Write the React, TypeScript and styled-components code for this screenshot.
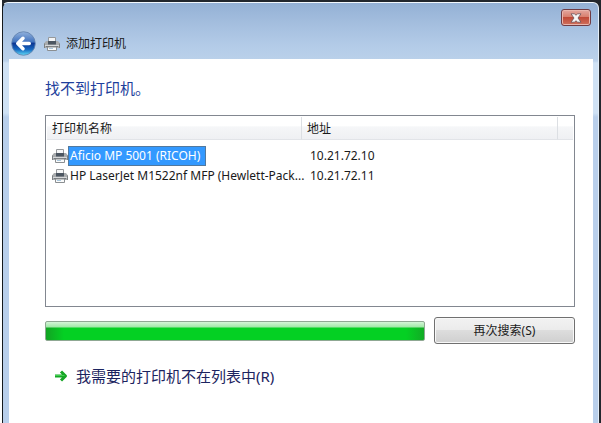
import React, { useState } from "react";
import styled, { createGlobalStyle } from "styled-components";

const GlobalStyle = createGlobalStyle`
  *, *::before, *::after { box-sizing: border-box; }
  html, body, #root { height: 100%; }
  body {
    margin: 0;
    overflow: hidden;
    background: #0b1d2e;
    font: 12px/20px "Noto Sans", "Noto Sans CJK SC", sans-serif;
    color: #1a1a1a;
  }
  button { font: inherit; color: inherit; }
  svg { flex-shrink: 0; }
`;

const Desktop = styled.div`
  min-height: 100%;
  display: flex;
  padding: 2px 2px 0;
  background: linear-gradient(90deg, #fff 0 2px, #22272d 2px);
`;

const WindowFrame = styled.main`
  flex: 1;
  min-width: 0;
  display: flex;
  flex-direction: column;
  padding: 0 5px 0 6px;
  border: 1px solid #e4eef8;
  border-top-color: #f2f8fd;
  border-bottom: 0;
  border-left-color: #14181c;
  border-radius: 6px 6px 0 0;
  background: linear-gradient(
    180deg,
    #94b1d5 0,
    #a5bfdf 22px,
    #b4cce8 44px,
    #bbd1ea 58px,
    #cfe1f4 60px,
    #cfe1f4 110px,
    #b9cfeb 114px
  );
`;

const TitleBar = styled.header`
  display: flex;
  height: 56px;
  align-items: flex-start;
  justify-content: space-between;
  padding: 6px 2px 0;
`;

const TitleGroup = styled.div`
  display: flex;
  align-items: center;
  padding-top: 22px;
`;

const Title = styled.h1`
  margin: 0 0 0 6px;
  font-size: 12px;
  font-weight: 400;
  line-height: 24px;
`;

const BackButton = styled.button`
  display: flex;
  width: 25px;
  height: 25px;
  padding: 0;
  margin-right: 8px;
  border: 0;
  background: none;
`;

const CloseButton = styled.button`
  display: flex;
  width: 30px;
  height: 17px;
  align-items: center;
  justify-content: center;
  padding: 0;
  border: 1px solid #703c44;
  border-radius: 3px;
  background: linear-gradient(180deg, #e4a79f 0, #d8806f 45%, #c04a38 50%, #d0705c 100%);
  box-shadow: inset 0 0 0 1px #e9b5ac;
`;

const Content = styled.section`
  flex: 1;
  display: flex;
  flex-direction: column;
  padding: 17px 18px 0 36px;
  background: #fff;
`;

const Heading = styled.h2`
  margin: 0 0 15px;
  font-size: 15px;
  font-weight: 400;
  line-height: 24px;
  color: #1e3f9c;
`;

const ListBox = styled.div`
  height: 192px;
  padding: 1px;
  border: 1px solid #828790;
  background: #fff;
`;

const PrinterTable = styled.table`
  width: 100%;
  border-collapse: separate;
  border-spacing: 0;
  table-layout: fixed;
  white-space: nowrap;
`;

const HeaderCell = styled.th<{ $width?: string }>`
  width: ${(p) => p.$width ?? "auto"};
  height: 23px;
  padding: 2px 6px 0 5px;
  border-right: ${(p) => (p.$width ? "1px solid #dcdfe3" : "0")};
  border-bottom: 1px solid #e2e4e8;
  background: linear-gradient(180deg, #fff 0 40%, #f5f6f8 45%, #eff0f3);
  font-weight: 400;
  line-height: 18px;
  text-align: left;
`;

const SpacerRow = styled.tr`
  height: 6px;
`;

const NameCell = styled.td`
  height: 20px;
  padding: 0 0 0 5px;
`;

const AddressCell = styled.td`
  height: 20px;
  padding: 0 0 0 8px;
`;

const PrinterName = styled.div`
  display: flex;
  align-items: center;
`;

const NameLabel = styled.span<{ $selected: boolean }>`
  height: 20px;
  padding: 0 5px 0 1px;
  border: 1px solid ${(p) => (p.$selected ? "#52799e" : "transparent")};
  background: ${(p) => (p.$selected ? "#3399ff" : "transparent")};
  color: ${(p) => (p.$selected ? "#fff" : "inherit")};
  line-height: 18px;
`;

const ActionRow = styled.div`
  display: flex;
  align-items: center;
  gap: 9px;
  margin-top: 10px;
`;

const ProgressTrack = styled.div`
  flex: 1;
  height: 20px;
  border: 1px solid #8fa893;
  border-radius: 2px;
  background:
    linear-gradient(180deg, #d4f5d7 0, #a0e8a7 5px, transparent 6px),
    linear-gradient(90deg, #12a323, #04d023 18px, #04d023 calc(100% - 18px), #12ab25);
`;

const SearchButton = styled.button`
  width: 141px;
  height: 27px;
  padding: 0;
  border: 1px solid #707070;
  border-radius: 3px;
  background: linear-gradient(180deg, #f2f2f2 0, #ebebeb 49%, #dddddd 50%, #cfcfcf 100%);
  box-shadow: inset 0 0 0 1px #f8f8f8;
`;

const MissingLink = styled.a`
  display: flex;
  align-items: center;
  align-self: flex-start;
  gap: 8px;
  margin: 20px 0 0 9px;
  color: #1c2460;
  font-size: 15px;
  line-height: 24px;
  text-decoration: none;
`;

function PrinterIcon() {
  return (
    <svg width="16" height="16" viewBox="0 0 16 16" aria-hidden="true">
      <path d="M4.500 6V1.500h7V6" fill="#f4f5f6" stroke="#96999c" />
      <path d="M2 5h2v3h8V5h2l2 2.500V12H0V7.500z" fill="#a9acae" />
      <path d="M4 5h8v3.500H4z" fill="#4c5661" />
      <path d="M.5 7.500V12M15.500 7.500V12" stroke="#7c8083" />
      <path d="M1 9.500h14" stroke="#d6d8da" />
      <path d="M2 10.500h12" stroke="#74787b" />
      <path d="M3.500 11h9v3.500h-9z" fill="#fafbfb" stroke="#8b8f92" />
      <path d="M5 12.500h4" stroke="#a9c7dd" />
    </svg>
  );
}

function BackIcon() {
  return (
    <svg width="25" height="25" viewBox="0 0 24 24" aria-hidden="true">
      <defs>
        <linearGradient id="orb" x1="0" y1="0" x2="0" y2="1">
          <stop offset="0" stopColor="#91b1dc" />
          <stop offset="0.42" stopColor="#4475c0" />
          <stop offset="0.5" stopColor="#0c3794" />
          <stop offset="0.75" stopColor="#1567c0" />
          <stop offset="1" stopColor="#62dcf8" />
        </linearGradient>
      </defs>
      <circle cx="12" cy="12" r="11.300" fill="url(#orb)" stroke="#6282ad" strokeWidth="0.8" />
      <path
        d="M11.500 7L6.500 12l5 5M7 12h10.500"
        fill="none"
        stroke="#fff"
        strokeWidth="3.400"
        strokeLinecap="round"
        strokeLinejoin="round"
      />
    </svg>
  );
}

function CloseIcon() {
  return (
    <svg width="12" height="10" viewBox="0 0 12 10" aria-hidden="true">
      <path
        d="M1 .8h3.600L6 2.300 7.400.8H11L8 5l3 4.200H7.400L6 7.700 4.600 9.200H1L4 5z"
        fill="#f6f6f6"
        stroke="#6b5258"
        strokeWidth="0.8"
      />
    </svg>
  );
}

function ArrowIcon() {
  return (
    <svg width="14" height="14" viewBox="0 0 14 14" aria-hidden="true">
      <path
        d="M1 7h10M7 2.500L11.500 7 7 11.500"
        fill="none"
        stroke="#16a526"
        strokeWidth="3"
        strokeLinejoin="round"
      />
      <path d="M1 6.500h9.500" stroke="#3ed04c" />
    </svg>
  );
}

const printers = [
  { name: "Aficio MP 5001 (RICOH)", address: "10.21.72.10" },
  { name: "HP LaserJet M1522nf MFP (Hewlett-Pack...", address: "10.21.72.11" },
];

export default function App() {
  const [selected, setSelected] = useState(0);

  return (
    <>
      <GlobalStyle />
      <Desktop>
        <WindowFrame>
          <TitleBar>
            <TitleGroup>
              <BackButton type="button" aria-label="返回">
                <BackIcon />
              </BackButton>
              <PrinterIcon />
              <Title>添加打印机</Title>
            </TitleGroup>
            <CloseButton type="button" aria-label="关闭">
              <CloseIcon />
            </CloseButton>
          </TitleBar>
          <Content>
            <Heading>找不到打印机。</Heading>
            <ListBox>
              <PrinterTable>
                <thead>
                  <tr>
                    <HeaderCell scope="col" $width="255px">打印机名称</HeaderCell>
                    <HeaderCell scope="col" $width="256px">地址</HeaderCell>
                    <HeaderCell as="td" />
                  </tr>
                </thead>
                <tbody>
                  <SpacerRow aria-hidden="true">
                    <td colSpan={3} />
                  </SpacerRow>
                  {printers.map((printer, i) => (
                    <tr key={printer.address} aria-selected={i === selected} onClick={() => setSelected(i)}>
                      <NameCell>
                        <PrinterName>
                          <PrinterIcon />
                          <NameLabel $selected={i === selected}>{printer.name}</NameLabel>
                        </PrinterName>
                      </NameCell>
                      <AddressCell>{printer.address}</AddressCell>
                      <td />
                    </tr>
                  ))}
                </tbody>
              </PrinterTable>
            </ListBox>
            <ActionRow>
              <ProgressTrack role="progressbar" aria-label="搜索进度" aria-valuenow={100} aria-valuemin={0} aria-valuemax={100} />
              <SearchButton type="button">再次搜索(S)</SearchButton>
            </ActionRow>
            <MissingLink href="#manual">
              <ArrowIcon />
              我需要的打印机不在列表中(R)
            </MissingLink>
          </Content>
        </WindowFrame>
      </Desktop>
    </>
  );
}
